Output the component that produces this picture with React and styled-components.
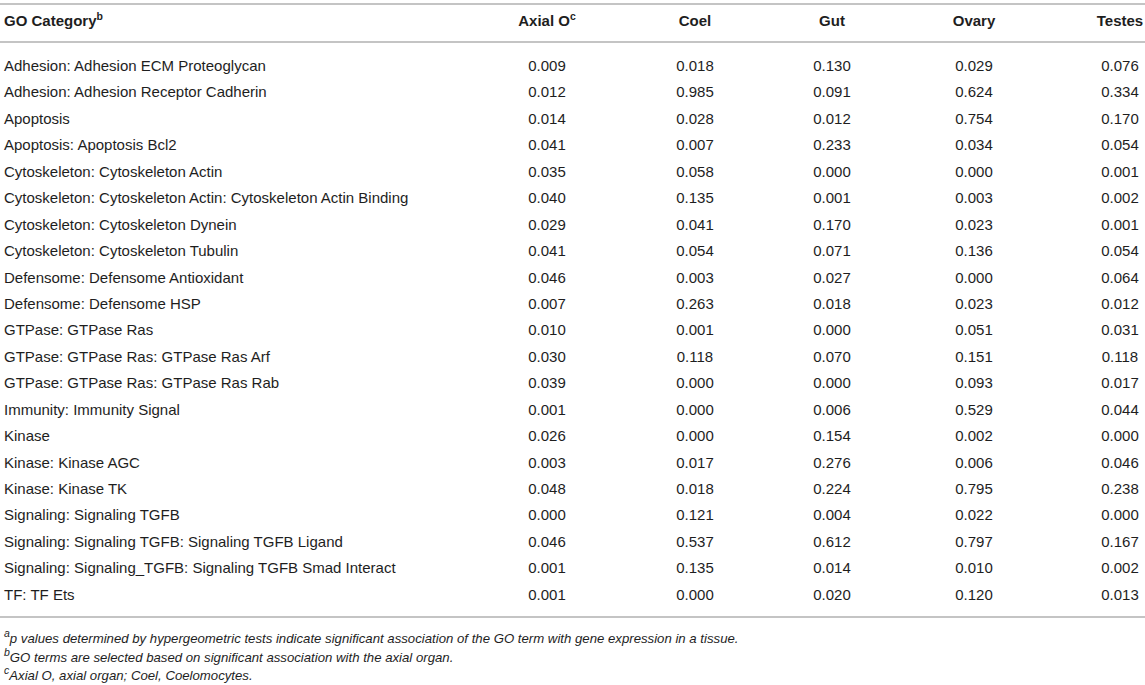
import React from 'react';
import styled, { createGlobalStyle } from 'styled-components';

const rows = [
  ['Adhesion: Adhesion ECM Proteoglycan', '0.009', '0.018', '0.130', '0.029', '0.076'],
  ['Adhesion: Adhesion Receptor Cadherin', '0.012', '0.985', '0.091', '0.624', '0.334'],
  ['Apoptosis', '0.014', '0.028', '0.012', '0.754', '0.170'],
  ['Apoptosis: Apoptosis Bcl2', '0.041', '0.007', '0.233', '0.034', '0.054'],
  ['Cytoskeleton: Cytoskeleton Actin', '0.035', '0.058', '0.000', '0.000', '0.001'],
  ['Cytoskeleton: Cytoskeleton Actin: Cytoskeleton Actin Binding', '0.040', '0.135', '0.001', '0.003', '0.002'],
  ['Cytoskeleton: Cytoskeleton Dynein', '0.029', '0.041', '0.170', '0.023', '0.001'],
  ['Cytoskeleton: Cytoskeleton Tubulin', '0.041', '0.054', '0.071', '0.136', '0.054'],
  ['Defensome: Defensome Antioxidant', '0.046', '0.003', '0.027', '0.000', '0.064'],
  ['Defensome: Defensome HSP', '0.007', '0.263', '0.018', '0.023', '0.012'],
  ['GTPase: GTPase Ras', '0.010', '0.001', '0.000', '0.051', '0.031'],
  ['GTPase: GTPase Ras: GTPase Ras Arf', '0.030', '0.118', '0.070', '0.151', '0.118'],
  ['GTPase: GTPase Ras: GTPase Ras Rab', '0.039', '0.000', '0.000', '0.093', '0.017'],
  ['Immunity: Immunity Signal', '0.001', '0.000', '0.006', '0.529', '0.044'],
  ['Kinase', '0.026', '0.000', '0.154', '0.002', '0.000'],
  ['Kinase: Kinase AGC', '0.003', '0.017', '0.276', '0.006', '0.046'],
  ['Kinase: Kinase TK', '0.048', '0.018', '0.224', '0.795', '0.238'],
  ['Signaling: Signaling TGFB', '0.000', '0.121', '0.004', '0.022', '0.000'],
  ['Signaling: Signaling TGFB: Signaling TGFB Ligand', '0.046', '0.537', '0.612', '0.797', '0.167'],
  ['Signaling: Signaling_TGFB: Signaling TGFB Smad Interact', '0.001', '0.135', '0.014', '0.010', '0.002'],
  ['TF: TF Ets', '0.001', '0.000', '0.020', '0.120', '0.013'],
];

const GlobalStyle = createGlobalStyle`
  body {
    margin: 0;
    background: #fff;
    font-family: 'Liberation Sans', Arial, Helvetica, sans-serif;
    color: #1e1e1e;
  }
`;

const Page = styled.div`
  padding-top: 3px;
`;

const Grid = styled.div`
  display: grid;
  grid-template-columns: 515px 64px 232px 42px 242px 46px;
  font-size: 15px;
`;

const HeadRow = styled.div`
  display: contents;
`;

const HeadCell = styled.div`
  border-top: 2px solid #c4c4c4;
  border-bottom: 2px solid #c4c4c4;
  height: 33px;
  line-height: 32px;
  padding-bottom: 3px;
  font-weight: 700;
  white-space: nowrap;
  text-align: ${(p) => (p.left ? 'left' : 'center')};
  padding-left: ${(p) => (p.left ? '4px' : '0')};
  margin-right: ${(p) => (p.last ? '-4px' : '0')};
`;

const Cell = styled.div`
  height: 26.45px;
  line-height: 26.45px;
  white-space: nowrap;
  text-align: ${(p) => (p.left ? 'left' : 'center')};
  padding-left: ${(p) => (p.left ? '4px' : '0')};
  padding-top: ${(p) => (p.first ? '10px' : '0')};
  padding-bottom: ${(p) => (p.final ? '8px' : '0')};
  border-bottom: ${(p) => (p.final ? '2px solid #c4c4c4' : 'none')};
  margin-right: ${(p) => (p.last ? '-4px' : '0')};
`;

const Sup = styled.sup`
  font-size: 10.5px;
  vertical-align: 6px;
  line-height: 0;
`;

const Notes = styled.div`
  padding: 12px 4px 0;
  font-size: 13.2px;
  font-style: italic;
  line-height: 18.5px;
`;

const heads = ['Axial O', 'Coel', 'Gut', 'Ovary', 'Testes'];

export default function App() {
  return (
    <Page>
      <GlobalStyle />
      <Grid>
        <HeadRow>
          <HeadCell left>
            GO Category<Sup>b</Sup>
          </HeadCell>
          {heads.map((h, i) => (
            <HeadCell key={h} last={i === 4}>
              {h}
              {i === 0 && <Sup>c</Sup>}
            </HeadCell>
          ))}
        </HeadRow>
        {rows.map((r, ri) =>
          r.map((v, ci) => (
            <Cell
              key={ri + '-' + ci}
              left={ci === 0}
              last={ci === 5}
              first={ri === 0}
              final={ri === rows.length - 1}
            >
              {v}
            </Cell>
          ))
        )}
      </Grid>
      <Notes>
        <div>
          <Sup>a</Sup>p values determined by hypergeometric tests indicate significant association of the GO term with gene expression in a tissue.
        </div>
        <div>
          <Sup>b</Sup>GO terms are selected based on significant association with the axial organ.
        </div>
        <div>
          <Sup>c</Sup>Axial O, axial organ; Coel, Coelomocytes.
        </div>
      </Notes>
    </Page>
  );
}
